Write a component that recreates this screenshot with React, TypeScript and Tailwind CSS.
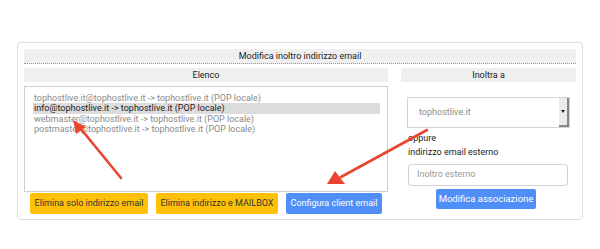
import React from "react";

const items = [
  "tophostlive.it@tophostlive.it -> tophostlive.it (POP locale)",
  "info@tophostlive.it -> tophostlive.it (POP locale)",
  "webmaster@tophostlive.it -> tophostlive.it (POP locale)",
  "postmaster@tophostlive.it -> tophostlive.it (POP locale)",
];

export default function App() {
  return (
    <div className="relative w-[600px] h-[249px] bg-white font-['Roboto',sans-serif] text-[#333] overflow-hidden">
      <div className="pt-[42px] pl-[17px]">
        <div className="w-[566px] h-[178px] border border-[#dedede] rounded-[4px] px-[6px] pt-[6px]">
          <div className="h-[15px] bg-[#efefef] border-b border-dotted border-[#6d9fe3] text-[9px] leading-[14px] text-center text-[#222]">
            Modifica inoltro indirizzo email
          </div>
          <div className="flex gap-[13px] mt-[4px]">
            <div className="w-[364px] flex flex-col">
              <div className="h-[14px] bg-[#efefef] text-[9px] leading-[14px] text-center text-[#222]">Elenco</div>
              <div className="mt-[4px] h-[106px] border border-[#cfcfcf] pl-[8px] pr-[7px] pt-[6px]">
                {items.map((t, i) => (
                  <div
                    key={i}
                    className={
                      i === 1
                        ? "h-[10.4px] leading-[10.4px] text-[9px] pl-[1px] bg-[#dcdcdc] text-[#222] whitespace-nowrap"
                        : "h-[10.4px] leading-[10.4px] text-[9px] pl-[1px] text-[#8a8a8a] whitespace-nowrap"
                    }
                  >
                    {t}
                  </div>
                ))}
              </div>
              <div className="flex gap-[8px] pl-[6px] pt-[1px]">
                <button className="w-[118px] h-[21px] rounded-[2px] bg-[#ffc107] text-[9px] text-[#333] whitespace-nowrap">Elimina solo indirizzo email</button>
                <button className="w-[122px] h-[21px] rounded-[2px] bg-[#ffc107] text-[9px] text-[#333] whitespace-nowrap">Elimina indirizzo e MAILBOX</button>
                <button className="w-[96px] h-[21px] rounded-[2px] bg-[#4f8ff7] text-[9px] text-white whitespace-nowrap">Configura client email</button>
              </div>
            </div>
            <div className="w-[175px] flex flex-col">
              <div className="h-[14px] bg-[#efefef] text-[9px] leading-[14px] text-center text-[#222]">Inoltra a</div>
              <div className="mt-[15px] ml-[6px] w-[163px] h-[31px] border border-[#d4d4d4] flex items-stretch">
                <div className="flex-1 flex items-center pl-[11px] text-[9px] text-[#8a8a8a]">tophostlive.it</div>
                <div className="w-[10px] bg-[#ececec] border-r-2 border-b-2 border-[#888] flex items-center justify-center">
                  <span className="block w-0 h-0 border-l-[2px] border-r-[2px] border-t-[3px] border-l-transparent border-r-transparent border-t-[#222]"></span>
                </div>
              </div>
              <div className="ml-[7px] mt-[3px] text-[9px] leading-[14px] text-[#222]">oppure</div>
              <div className="ml-[7px] text-[9px] leading-[14px] text-[#222]">indirizzo email esterno</div>
              <div className="ml-[7px] mt-[5px] w-[160px] h-[22px] border border-[#d4d4d4] rounded-[3px] flex items-center pl-[8px] text-[9px] text-[#999]">
                Inoltro esterno
              </div>
              <button className="mt-[3px] ml-[35px] w-[100px] h-[20px] rounded-[2px] bg-[#4f8ff7] text-[9.5px] text-white whitespace-nowrap">Modifica associazione</button>
            </div>
          </div>
        </div>
      </div>
      <svg className="absolute inset-0 pointer-events-none" width="600" height="249" viewBox="0 0 600 249">
        <line x1="121" y1="178" x2="81" y2="129" stroke="#e8462f" strokeWidth="2.6" strokeLinecap="round" />
        <polygon points="73,120 86,127 76,134" fill="#e8462f" />
        <line x1="427" y1="130" x2="341" y2="177" stroke="#e8462f" strokeWidth="2.6" strokeLinecap="round" />
        <polygon points="327,184 335,171 345,184" fill="#e8462f" />
      </svg>
    </div>
  );
}
